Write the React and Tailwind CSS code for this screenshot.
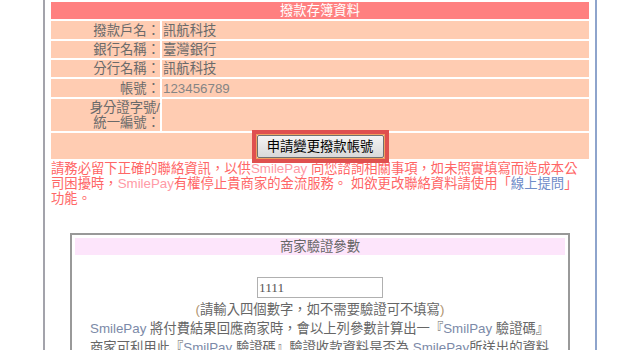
import React from 'react';

// 撥款存簿資料 + 商家驗證參數 panel

const rows = [
    { label: '撥款戶名：', value: '訊航科技', h: 'h-[18px]' },
    { label: '銀行名稱：', value: '臺灣銀行', h: 'h-[17px]' },
    { label: '分行名稱：', value: '訊航科技', h: 'h-[17px]' },
    { label: '帳號：', value: '123456789', h: 'h-[18px]', latin: true },
];

const App = () => {
    return (
        <div className="w-[640px] h-[350px] overflow-hidden bg-white font-['Liberation_Sans','Noto_Sans_CJK_TC',sans-serif] text-[13.33px]">
            <div className="ml-[43px] w-[554px] h-full border-l-2 border-l-[#a3a3ab] border-r-2 border-r-[#8ea4cc] px-[4px]">
                <table className="w-full border-separate border-spacing-[2px]">
                    <tbody>
                        <tr>
                            <td colSpan={2} className="h-[17px] p-0 bg-[#ff8080] text-white text-center leading-[17px]">撥款存簿資料</td>
                        </tr>
                        {rows.map((r) => (
                            <tr key={r.label}>
                                <td className={`${r.h} w-[109px] p-0 bg-[#ffccb2] text-right text-[#6a6a6a] leading-[15px]`}>{r.label}</td>
                                <td className={`${r.h} p-0 pl-[1px] bg-[#ffccb2] leading-[15px] ${r.latin ? 'text-[#858585]' : 'text-[#6a6a6a]'}`}>{r.value}</td>
                            </tr>
                        ))}
                        <tr>
                            <td className="h-[32px] w-[109px] p-0 bg-[#ffccb2] text-right text-[#6a6a6a] leading-[15px]">
                                身分證字號/<br />統一編號：
                            </td>
                            <td className="h-[32px] p-0 bg-[#ffccb2]"></td>
                        </tr>
                        <tr>
                            <td colSpan={2} className="h-[26px] p-0 bg-[#ffccb2] text-center align-middle">
                                <span className="relative inline-block align-middle">
                                    <button className="w-[127px] h-[23px] border border-[#707070] rounded-[2px] bg-gradient-to-b from-[#f4f4f4] to-[#d9d9d9] text-black leading-[21px]">
                                        申請變更撥款帳號
                                    </button>
                                    <span className="absolute -inset-[5px] border-4 border-[#df504f] pointer-events-none"></span>
                                    <span className="absolute -inset-[1px] border border-[#f0a060] pointer-events-none"></span>
                                </span>
                            </td>
                        </tr>
                    </tbody>
                </table>

                <div className="pl-[2px] text-[#ff6666] leading-[15px] whitespace-nowrap">
                    <div>請務必留下正確的聯絡資訊，以供<span className="text-[#ff9aa6]">SmilePay</span> 向您諮詢相關事項，如未照實填寫而造成本公</div>
                    <div>司困擾時，<span className="text-[#ff9aa6]">SmilePay</span>有權停止貴商家的金流服務。 如欲更改聯絡資料請使用「<span className="text-[#6f8cc8]">線上提問</span>」</div>
                    <div>功能。</div>
                </div>

                <div className="mt-[27px] mx-auto w-[500px] h-[200px] border-2 border-[#999999] p-[3px]">
                    <div className="h-[17px] bg-[#fde5fb] text-center text-[#666666] leading-[17px]">商家驗證參數</div>
                    <div className="mt-[22px] flex justify-center">
                        <input
                            readOnly
                            defaultValue="1111"
                            className="w-[126px] h-[21px] border border-[#b0b0b0] pl-[1px] font-['Liberation_Serif',serif] text-[13.33px] text-[#555555] outline-none"
                        />
                    </div>
                    <div className="mt-[2px] text-center text-[#666666] leading-[19px]">
                        <span className="text-[#b09470]">(</span>請輸入四個數字，如不需要驗證可不填寫<span className="text-[#b09470]">)</span>
                    </div>
                    <div className="pl-[15px] text-[#666666] leading-[19px] whitespace-nowrap">
                        <div><span className="text-[#7c8aa8]">SmilePay</span> 將付費結果回應商家時，會以上列參數計算出一『<span className="text-[#7c8aa8]">SmilPay</span> 驗證碼』</div>
                        <div>商家可利用此『<span className="text-[#7c8aa8]">SmilPay</span> 驗證碼』驗證收款資料是否為 <span className="text-[#7c8aa8]">SmilePay</span>所送出的資料</div>
                    </div>
                </div>
            </div>
        </div>
    );
};

export default App;
